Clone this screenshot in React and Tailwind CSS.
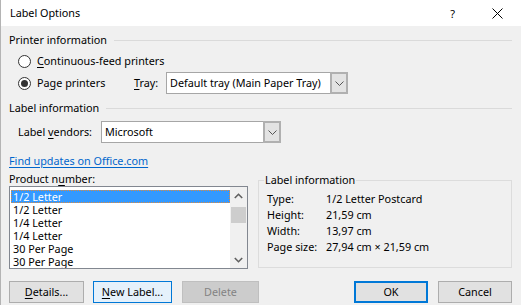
import React from "react";

const font = { fontFamily: '"Noto Sans", "Liberation Sans", sans-serif' };

function Chevron({ className = "" }) {
  return (
    <svg width="9" height="5" viewBox="0 0 9 5" className={className}>
      <path d="M0.5 0.5 L4.5 4.5 L8.5 0.5" fill="none" stroke="#555" strokeWidth="1" />
    </svg>
  );
}

function Select({ value, className }) {
  return (
    <div className={`flex h-[22px] items-stretch border border-[#a6a6a6] bg-white ${className}`}>
      <div className="flex flex-1 items-center whitespace-nowrap pl-[3px] text-[10.8px] leading-none text-black">{value}</div>
      <div className="-my-px -mr-px flex w-[18px] items-center justify-center border-2 border-[#b0b0b0] bg-[#e3e3e3]">
        <Chevron />
      </div>
    </div>
  );
}

function Radio({ checked }) {
  return (
    <div className="flex h-[13px] w-[13px] items-center justify-center rounded-full border border-[#333] bg-white">
      {checked && <div className="h-[7px] w-[7px] rounded-full bg-[#333]" />}
    </div>
  );
}

function Header({ children }) {
  return (
    <div className="flex h-[14px] items-center gap-[7px]">
      <span className="whitespace-nowrap text-[10.8px] leading-none text-black">{children}</span>
      <div className="h-px flex-1 bg-[#dadada]" />
    </div>
  );
}

function Btn({ children, className = "" }) {
  return (
    <div className={`flex h-[22px] items-center justify-center whitespace-nowrap text-[10.8px] leading-none ${className}`}>
      {children}
    </div>
  );
}

const items = ["1/2 Letter", "1/2 Letter", "1/4 Letter", "1/4 Letter", "30 Per Page", "30 Per Page"];

export default function App() {
  return (
    <div className="h-[305px] w-[521px] overflow-hidden border-l border-[#b4b4b4] bg-[#f0f0f0] text-black" style={font}>
      <div className="flex h-[26px] items-center bg-white pl-[9px]">
        <span className="text-[10.8px] leading-none">Label Options</span>
        <div className="flex-1" />
        <span className="mr-[37px] text-[11px] leading-none">?</span>
        <svg width="11" height="11" viewBox="0 0 11 11" className="mr-[18px]">
          <path d="M0.5 0.5 L10.5 10.5 M10.5 0.5 L0.5 10.5" stroke="#000" strokeWidth="1" />
        </svg>
      </div>

      <div className="flex flex-col pl-[8px] pr-[9px]">
        <div className="mt-[7px]">
          <Header>Printer information</Header>
        </div>
        <div className="mt-[7px] flex h-[14px] items-center pl-[9px]">
          <Radio />
          <span className="ml-[6px] text-[10.8px] leading-none">
            <span className="underline underline-offset-2">C</span>ontinuous-feed printers
          </span>
        </div>
        <div className="mt-[4px] flex h-[22px] items-center pl-[9px]">
          <Radio checked />
          <span className="ml-[6px] w-[97px] whitespace-nowrap text-[10.8px] leading-none">
            Pa<span className="underline underline-offset-2">g</span>e printers
          </span>
          <span className="w-[32px] text-[10.8px] leading-none">
            <span className="underline underline-offset-2">T</span>ray:
          </span>
          <Select value="Default tray (Main Paper Tray)" className="w-[182px]" />
        </div>
        <div className="mt-[7px]">
          <Header>Label information</Header>
        </div>
        <div className="mt-[6px] flex h-[22px] items-center pl-[9px]">
          <span className="w-[83px] whitespace-nowrap text-[10.8px] leading-none">
            Label <span className="underline underline-offset-2">v</span>endors:
          </span>
          <Select value="Microsoft" className="w-[180px]" />
        </div>
        <div className="mt-[11px] flex h-[14px] items-center">
          <span className="text-[10.8px] leading-none text-[#0066cc] underline underline-offset-2">Find updates on Office.com</span>
        </div>

        <div className="mt-[4px] flex gap-[10px]">
          <div className="flex w-[241px] flex-col">
            <div className="flex h-[14px] items-center">
              <span className="text-[10.8px] leading-none">
                Product n<span className="underline underline-offset-2">u</span>mber:
              </span>
            </div>
            <div className="flex h-[83px] border border-[#828790] bg-white">
              <div className="flex flex-1 flex-col overflow-hidden pl-[1px] pt-[3px]">
                {items.map((t, i) => (
                  <div
                    key={i}
                    className={`flex h-[13px] shrink-0 items-center pl-[1px] text-[10.8px] leading-[12px] ${
                      i === 0 ? "border border-dotted border-[#e08a3c] bg-[#3399ff] text-white" : "border border-transparent"
                    }`}
                  >
                    {t}
                  </div>
                ))}
              </div>
              <div className="flex w-[17px] flex-col items-center bg-[#f0f0f0]">
                <div className="flex h-[17px] w-full items-center justify-center">
                  <svg width="9" height="6" viewBox="0 0 9 6">
                    <path d="M0.8 5 L4.5 1.3 L8.2 5" fill="none" stroke="#606060" strokeWidth="1.6" />
                  </svg>
                </div>
                <div className="mt-[3px] h-[16px] w-[15px] bg-[#cdcdcd]" />
                <div className="flex-1" />
                <div className="flex h-[17px] w-full items-center justify-center">
                  <svg width="9" height="6" viewBox="0 0 9 6">
                    <path d="M0.8 1 L4.5 4.7 L8.2 1" fill="none" stroke="#606060" strokeWidth="1.6" />
                  </svg>
                </div>
              </div>
            </div>
          </div>

          <fieldset className="mt-[1px] h-[95px] w-[256px] border border-[#dcdcdc] pl-[8px] pt-[4px]">
            <legend className="-ml-[3px] px-[1px] text-[10.8px] leading-[14px]">Label information</legend>
            {[
              ["Type:", "1/2 Letter Postcard"],
              ["Height:", "21,59 cm"],
              ["Width:", "13,97 cm"],
              ["Page size:", "27,94 cm × 21,59 cm"],
            ].map(([k, v]) => (
              <div key={k} className="flex h-[16px] items-center whitespace-nowrap text-[10.8px] leading-none">
                <span className="w-[59px]">{k}</span>
                <span>{v}</span>
              </div>
            ))}
          </fieldset>
        </div>

        <div className="mt-[12px] flex">
          <Btn className="w-[75px] border border-[#adadad] bg-[#e1e1e1]">
            <span>
              <span className="underline underline-offset-2">D</span>etails...
            </span>
          </Btn>
          <Btn className="ml-[9px] w-[79px] border border-[#0078d7] bg-[#e5f1fb]">
            <span>
              <span className="underline underline-offset-2">N</span>ew Label...
            </span>
          </Btn>
          <Btn className="ml-[10px] w-[77px] border border-[#bfbfbf] bg-[#cccccc] text-[#838383]">Delete</Btn>
          <div className="flex-1" />
          <Btn className="w-[74px] border-2 border-[#0078d7] bg-[#e1e1e1]">OK</Btn>
          <Btn className="ml-[10px] w-[74px] border border-[#adadad] bg-[#e1e1e1]">Cancel</Btn>
        </div>
      </div>
    </div>
  );
}
